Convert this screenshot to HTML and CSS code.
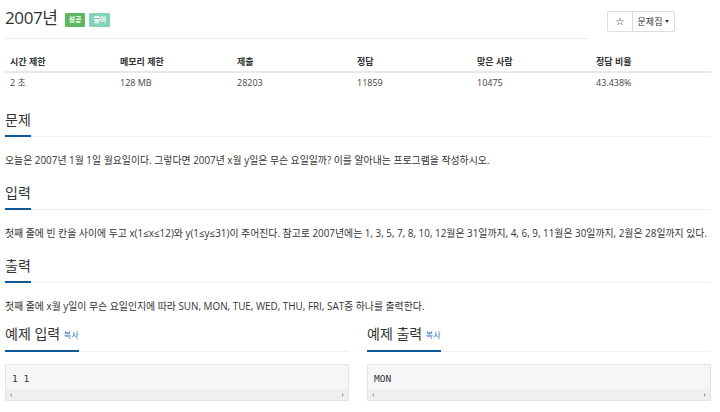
FILE: index.html
```html
<!DOCTYPE html>
<html lang="ko">
<head>
<meta charset="utf-8">
<title>2007년</title>
<link rel="stylesheet" href="styles.css">
</head>
<body>
<div class="page">
  <div class="top">
    <div class="page-header">
      <h1 class="title">2007년</h1>
      <span class="badge badge-success">성공</span>
      <span class="badge badge-solve">풀이</span>
    </div>
    <div class="btn-group">
      <button class="btn btn-star">☆</button>
      <button class="btn btn-set">문제집 <span class="caret"></span></button>
    </div>
  </div>

  <table class="info">
    <thead>
      <tr><th class="c1">시간 제한</th><th class="c2">메모리 제한</th><th class="c3">제출</th><th class="c4">정답</th><th class="c5">맞은 사람</th><th class="c6">정답 비율</th></tr>
    </thead>
    <tbody>
      <tr><td>2 초</td><td>128 MB</td><td>28203</td><td>11859</td><td>10475</td><td>43.438%</td></tr>
    </tbody>
  </table>

  <section class="section">
    <div class="headline"><h2>문제</h2></div>
    <p class="text">오늘은 2007년 1월 1일 월요일이다. 그렇다면 2007년 x월 y일은 무슨 요일일까? 이를 알아내는 프로그램을 작성하시오.</p>
  </section>

  <section class="section">
    <div class="headline"><h2>입력</h2></div>
    <p class="text">첫째 줄에 빈 칸을 사이에 두고 x(1≤x≤12)와 y(1≤y≤31)이 주어진다. 참고로 2007년에는 1, 3, 5, 7, 8, 10, 12월은 31일까지, 4, 6, 9, 11월은 30일까지, 2월은 28일까지 있다.</p>
  </section>

  <section class="section">
    <div class="headline"><h2>출력</h2></div>
    <p class="text">첫째 줄에 x월 y일이 무슨 요일인지에 따라 SUN, MON, TUE, WED, THU, FRI, SAT중 하나를 출력한다.</p>
  </section>

  <div class="samples">
    <section class="section">
      <div class="headline"><h2>예제 입력 <a class="copy">복사</a></h2></div>
      <div class="code">
        <pre>1 1</pre>
        <div class="scrollbar"><span class="arr-l"></span><span class="arr-r"></span></div>
      </div>
    </section>
    <section class="section">
      <div class="headline"><h2>예제 출력 <a class="copy">복사</a></h2></div>
      <div class="code">
        <pre>MON</pre>
        <div class="scrollbar"><span class="arr-l"></span><span class="arr-r"></span></div>
      </div>
    </section>
  </div>
</div>
</body>
</html>
```

FILE: styles.css
```css
* { box-sizing: border-box; }
html, body { margin: 0; padding: 0; background: #fff; }
body {
  font-family: "Open Sans", "Noto Sans CJK KR", sans-serif;
  color: #333;
  font-size: 9px;
}
.page { width: 706px; margin-left: 5px; }

.top { display: flex; align-items: flex-start; }
.page-header {
  flex: 1;
  display: flex;
  align-items: center;
  padding-top: 6px;
  padding-bottom: 8px;
  border-bottom: 1px solid #eee;
}
.title {
  margin: 0;
  font-size: 17px;
  line-height: 24px;
  font-weight: 400;
  color: #333;
  letter-spacing: -0.4px;
}
.badge {
  display: inline-block;
  height: 14px;
  line-height: 14px;
  padding: 0 4px;
  margin-left: 4px;
  font-size: 7px;
  font-weight: 700;
  color: #fff;
  border-radius: 1px;
  margin-top: 3px;
}
.badge-success { background: #5cb85c; margin-left: 7px; }
.badge-solve { background: #82d4b6; }

.btn-group { display: flex; margin-left: 18px; margin-top: 11px; margin-right: 36px; }
.btn {
  height: 21px;
  background: #fff;
  border: 1px solid #ddd;
  font-family: "Open Sans", "Noto Sans CJK KR", sans-serif;
  font-size: 9px;
  color: #333;
  padding: 0;
  display: flex;
  align-items: center;
  justify-content: center;
}
.btn-star { width: 26px; border-radius: 2px 0 0 2px; font-family: "DejaVu Sans", sans-serif; font-size: 10px; color: #111; font-weight: 700; }
.btn-set { width: 42px; border-left: 0; border-radius: 0 2px 2px 0; gap: 3px; }
.caret {
  width: 0; height: 0;
  border-left: 2.5px solid transparent;
  border-right: 2.5px solid transparent;
  border-top: 3px solid #333;
}

.info {
  width: 706px;
  margin-top: 12px;
  border-collapse: collapse;
  table-layout: fixed;
}
.info th, .info td { text-align: left; padding: 0 5px; line-height: 12px; }
.info th { font-weight: 700; padding-top: 5px; padding-bottom: 3px; border-bottom: 2px solid #e9e9e9; }
.info td { padding-top: 4px; padding-bottom: 4px; color: #444; }
.c1 { width: 110px; } .c2 { width: 117px; } .c3 { width: 120px; }
.c4 { width: 120px; } .c5 { width: 119px; } .c6 { width: 120px; }

.section { margin-top: 17px; }
.section + .section { margin-top: 15px; }
.headline { border-bottom: 1px solid #eee; }
.headline h2 {
  display: inline-block;
  margin: 0 0 -1px 0;
  padding-bottom: 5px;
  font-size: 14px;
  line-height: 20px;
  font-weight: 400;
  color: #333;
  border-bottom: 2px solid #0d5a96;
}
.text { margin: 15px 0 0 0; font-size: 9.9px; line-height: 16px; color: #333; }

.samples {
  display: grid;
  grid-template-columns: 344px 344px;
  column-gap: 18px;
  margin-top: 10px;
}
.samples .section { margin-top: 0; }
.copy { font-size: 8px; color: #2f74c0; vertical-align: 1px; }

.code {
  margin-top: 12px;
  background: #f6f6f8;
  border: 1px solid #e3e3e6;
  border-radius: 1px;
}
.code pre {
  margin: 0;
  padding: 8px 6px 4px 6px;
  font-family: "DejaVu Sans Mono", monospace;
  font-size: 9.5px;
  line-height: 12px;
  color: #333;
}
.scrollbar {
  height: 11px;
  background: #efefef;
  display: flex;
  justify-content: space-between;
  align-items: center;
  padding: 0 4px;
}
.arr-l, .arr-r { width: 0; height: 0; border-top: 2px solid transparent; border-bottom: 2px solid transparent; }
.arr-l { border-right: 2px solid #a8a8a8; }
.arr-r { border-left: 2px solid #a8a8a8; }
```
